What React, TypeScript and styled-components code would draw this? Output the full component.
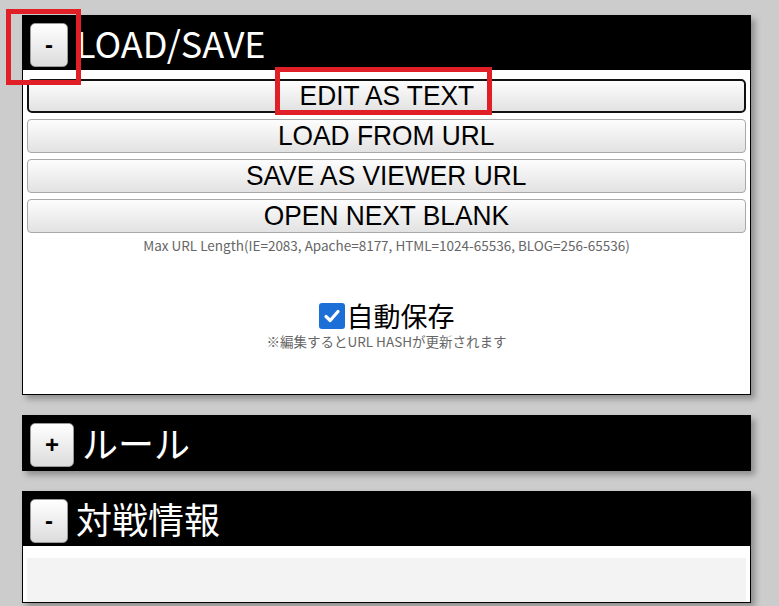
import React from "react";
import styled, { createGlobalStyle } from "styled-components";

const GlobalStyle = createGlobalStyle`
  html, body {
    margin: 0;
    padding: 0;
    background: #cccccc;
    overflow: hidden;
  }
  body {
    font-family: "Noto Sans CJK JP", "Noto Sans", sans-serif;
  }
`;

const Page = styled.div`
  position: relative;
  width: 779px;
  height: 606px;
  box-sizing: border-box;
  padding: 15px 28px 0 22px;
  display: flex;
  flex-direction: column;
  gap: 20px;
  overflow: hidden;
`;

const Panel = styled.section`
  background: #fff;
  border: 1px solid #000;
  border-top: none;
  box-shadow: 4px 4px 6px rgba(0, 0, 0, 0.3);
  display: flex;
  flex-direction: column;
`;

const Header = styled.div`
  height: 55px;
  background: #000;
  margin: 0 -1px;
  display: flex;
  align-items: center;
  gap: 8px;
  padding: 0 8px;
  box-sizing: border-box;
`;

const Toggle = styled.button`
  height: 44px;
  margin-top: 5px;
  padding: 0 14px;
  border: 1px solid #9a9a9a;
  border-radius: 5px;
  background: linear-gradient(#ffffff, #dcdcdc);
  font-family: "Liberation Sans", Arial, sans-serif;
  font-weight: bold;
  font-size: 24px;
  color: #000;
  line-height: 1;
  cursor: pointer;
`;

const Title = styled.h2`
  margin: 0 0 2px;
  color: #fff;
  font-family: "Noto Sans CJK JP", "Noto Sans", sans-serif;
  font-weight: normal;
  font-size: 36px;
  line-height: 1;
`;

const Body = styled.div`
  padding: 9px 4px 44px;
  display: flex;
  flex-direction: column;
`;

const ButtonList = styled.div`
  display: flex;
  flex-direction: column;
  gap: 6px;
`;

const ActionButton = styled.button<{ $focused?: boolean }>`
  height: 34px;
  padding: 0;
  box-sizing: border-box;
  border: ${(p) => (p.$focused ? "2px solid #111" : "1px solid #a8a8a8")};
  border-radius: ${(p) => (p.$focused ? "5px" : "4px")};
  background: linear-gradient(#fdfdfd, #e2e2e2);
  font-family: "Liberation Sans", Arial, sans-serif;
  font-size: 28px;
  color: #000;
  line-height: 1;
  cursor: pointer;
  display: flex;
  align-items: center;
  justify-content: center;
`;

const ButtonLabel = styled.span`
  display: inline-block;
  transform: scaleX(0.94);
  white-space: nowrap;
`;

const Hint = styled.div`
  margin-top: 3px;
  text-align: center;
  font-size: 13.5px;
  line-height: 18px;
  color: #666;
`;

const AutoSaveRow = styled.label`
  margin-top: 47px;
  display: flex;
  justify-content: center;
  align-items: center;
  gap: 2px;
  height: 30px;
`;

const CheckBox = styled.span`
  width: 26px;
  height: 26px;
  border-radius: 3px;
  background: #1c6fd6;
  display: flex;
  align-items: center;
  justify-content: center;
`;

const AutoSaveText = styled.span`
  font-size: 27px;
  line-height: 30px;
  color: #000;
`;

const Note = styled.div`
  margin-top: 1px;
  text-align: center;
  font-size: 13.5px;
  line-height: 18px;
  color: #666;
`;

const InfoBody = styled.div`
  padding: 12px 4px 0;
`;

const GrayBlock = styled.div`
  height: 44px;
  background: #f3f3f3;
`;

const Annotation = styled.div<{ $l: number; $t: number; $w: number; $h: number }>`
  position: absolute;
  left: ${(p) => p.$l}px;
  top: ${(p) => p.$t}px;
  width: ${(p) => p.$w}px;
  height: ${(p) => p.$h}px;
  box-sizing: border-box;
  border: 5px solid #e11f26;
  pointer-events: none;
`;

const actions = ["EDIT AS TEXT", "LOAD FROM URL", "SAVE AS VIEWER URL", "OPEN NEXT BLANK"];

export default function App() {
  return (
    <>
      <GlobalStyle />
      <Page>
        <Panel>
          <Header>
            <Toggle>-</Toggle>
            <Title>LOAD/SAVE</Title>
          </Header>
          <Body>
            <ButtonList>
              {actions.map((a, i) => (
                <ActionButton key={a} $focused={i === 0}>
                  <ButtonLabel>{a}</ButtonLabel>
                </ActionButton>
              ))}
            </ButtonList>
            <Hint>Max URL Length(IE=2083, Apache=8177, HTML=1024-65536, BLOG=256-65536)</Hint>
            <AutoSaveRow>
              <CheckBox>
                <svg width="20" height="20" viewBox="0 0 20 20">
                  <path d="M4 10.5 L8.2 14.5 L16 5.5" fill="none" stroke="#fff" strokeWidth="3.2" strokeLinecap="round" strokeLinejoin="round" />
                </svg>
              </CheckBox>
              <AutoSaveText>自動保存</AutoSaveText>
            </AutoSaveRow>
            <Note>※編集するとURL HASHが更新されます</Note>
          </Body>
        </Panel>
        <Panel>
          <Header>
            <Toggle>+</Toggle>
            <Title>ルール</Title>
          </Header>
        </Panel>
        <Panel>
          <Header>
            <Toggle>-</Toggle>
            <Title>対戦情報</Title>
          </Header>
          <InfoBody>
            <GrayBlock />
          </InfoBody>
        </Panel>
        <Annotation $l={6} $t={9} $w={75} $h={76} />
        <Annotation $l={275} $t={67} $w={217} $h={48} />
      </Page>
    </>
  );
}
